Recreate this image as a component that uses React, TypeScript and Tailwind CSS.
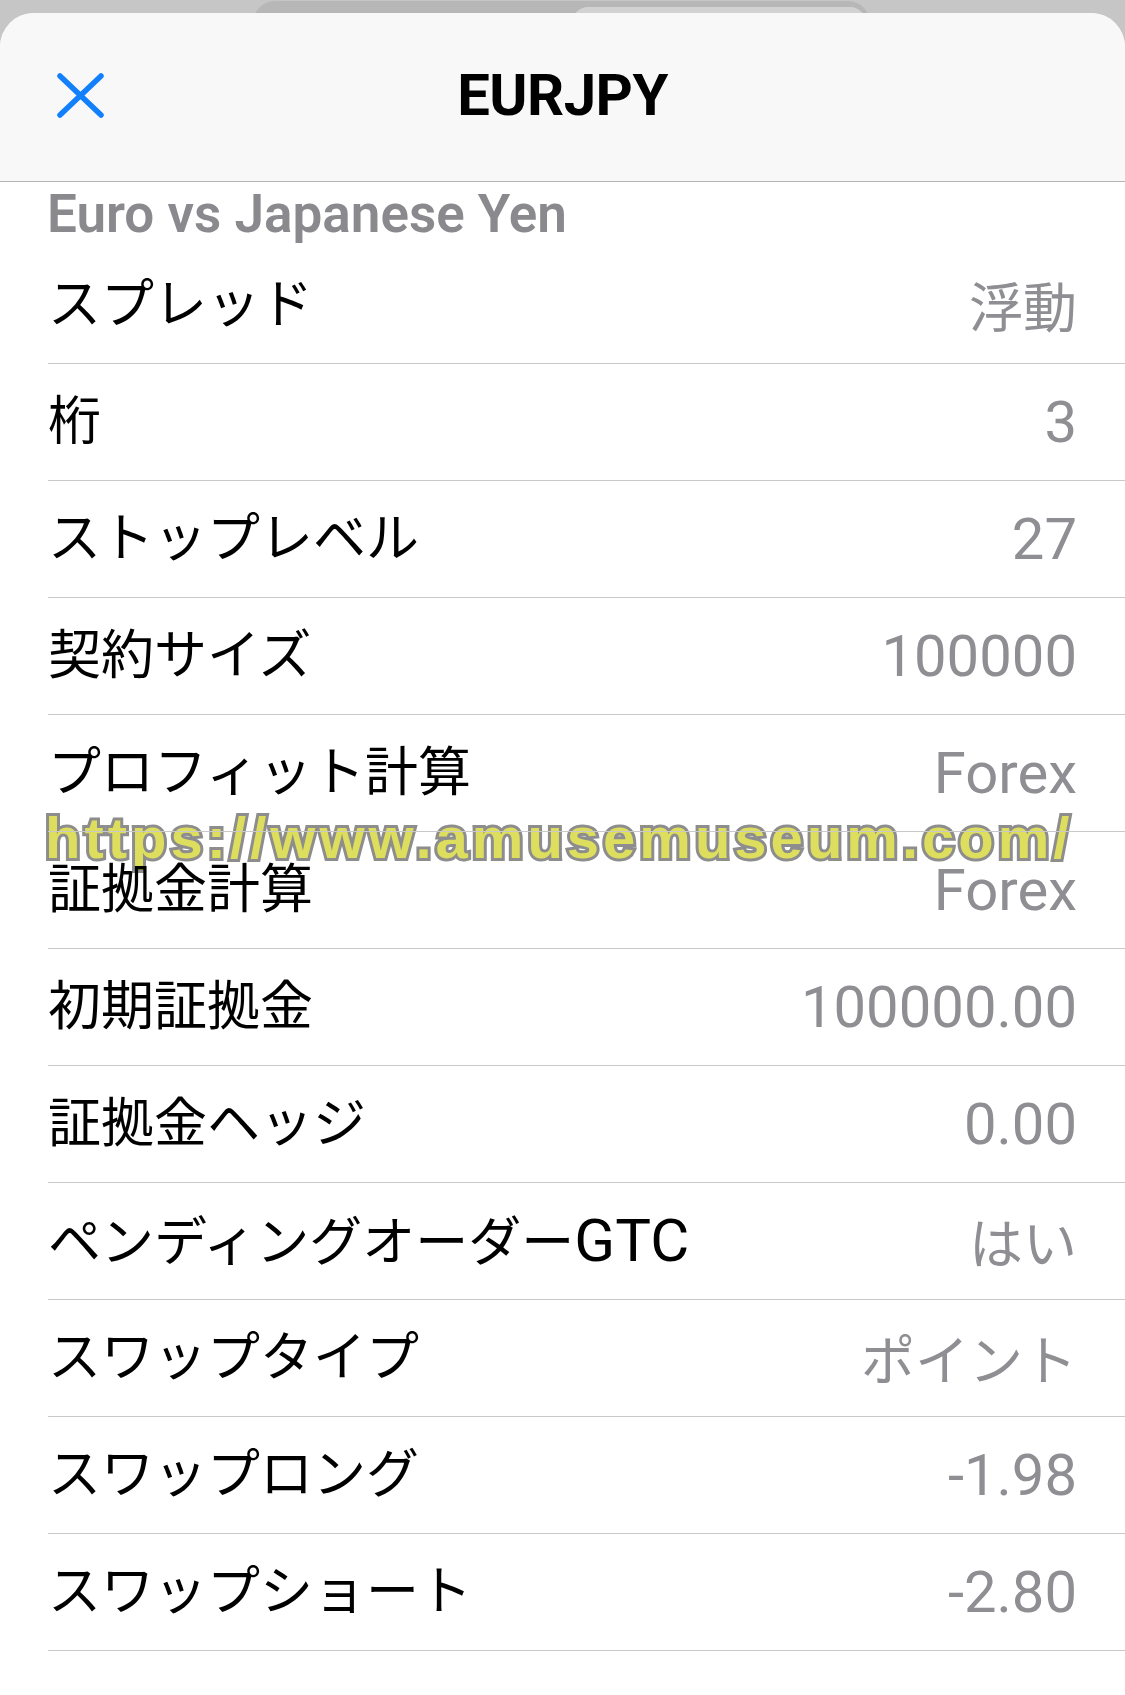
import React from "react";

type Row = { label: React.ReactNode; key: string; value: string; cjk?: boolean };

const rows: Row[] = [
  { key: "1", label: "スプレッド", value: "浮動", cjk: true },
  { key: "2", label: "桁", value: "3" },
  { key: "3", label: "ストップレベル", value: "27" },
  { key: "4", label: "契約サイズ", value: "100000" },
  { key: "5", label: "プロフィット計算", value: "Forex" },
  { key: "6", label: "証拠金計算", value: "Forex" },
  { key: "7", label: "初期証拠金", value: "100000.00" },
  { key: "8", label: "証拠金ヘッジ", value: "0.00" },
  {
    key: "9",
    label: (
      <>
        ペンディングオーダー<span className="text-[60px]">GTC</span>
      </>
    ),
    value: "はい",
    cjk: true,
  },
  { key: "10", label: "スワップタイプ", value: "ポイント", cjk: true },
  { key: "11", label: "スワップロング", value: "-1.98" },
  { key: "12", label: "スワップショート", value: "-2.80" },
];

export default function App() {
  return (
    <div className="relative w-[1125px] h-[1695px] overflow-hidden bg-[#c6c6c6] font-['Roboto','Noto_Sans_CJK_JP',sans-serif]">
      {/* stacked cards behind the sheet */}
      <div className="absolute left-[253px] top-[1px] w-[617px] h-[60px] rounded-t-[22px] bg-[#b7b7b7]" />
      <div className="absolute left-[572px] top-[7px] w-[294px] h-[60px] rounded-t-[16px] bg-[#d2d2d2]" />

      <div className="relative mt-[13px] h-[1682px] rounded-t-[34px] overflow-hidden bg-white">
        {/* header */}
        <div className="grid grid-cols-[1fr_auto_1fr] items-center h-[169px] bg-[#f8f8f8] border-b border-[#b4b4b4] pb-[4px]">
          <div className="pl-[57px] flex items-center">
            <svg width="47" height="45" viewBox="0 0 47 45" fill="none">
              <path d="M3 3 L44 42 M44 3 L3 42" stroke="#127ffb" strokeWidth="5.5" strokeLinecap="round" />
            </svg>
          </div>
          <div className="text-[58px] leading-none font-bold text-black tracking-[-0.5px]">EURJPY</div>
          <div />
        </div>

        {/* subtitle */}
        <div className="h-[65px] flex items-center pl-[47px]">
          <span className="text-[53px] leading-none font-semibold text-[#8a8a8e]">
            Euro vs Japanese Yen
          </span>
        </div>

        {/* rows */}
        <div className="relative z-10 pl-[48px]">
          {rows.map((r) => (
            <div
              key={r.key}
              className="h-[117px] flex items-center justify-between border-b border-[#c9c9cb] pr-[48px]"
            >
              <span className="text-[53px] leading-none text-black font-['Roboto','Noto_Sans_CJK_JP',sans-serif]">
                {r.label}
              </span>
              {r.cjk ? (
                <span className="text-[54px] leading-none text-[#8e8e93] font-['Noto_Sans_CJK_JP',sans-serif]">
                  {r.value}
                </span>
              ) : (
                <span className="text-[58px] leading-none text-[#8e8e93] font-['Roboto',sans-serif]">
                  {r.value}
                </span>
              )}
            </div>
          ))}
        </div>

        {/* watermark */}
        <div className="absolute z-0 left-[45px] top-[796px] whitespace-nowrap text-[58px] leading-none font-bold tracking-[4px] text-[#dede5e] font-['Liberation_Sans',sans-serif] [-webkit-text-stroke:6px_#8d8d8d] [paint-order:stroke_fill]">
          https://www.amusemuseum.com/
        </div>
      </div>
    </div>
  );
}
